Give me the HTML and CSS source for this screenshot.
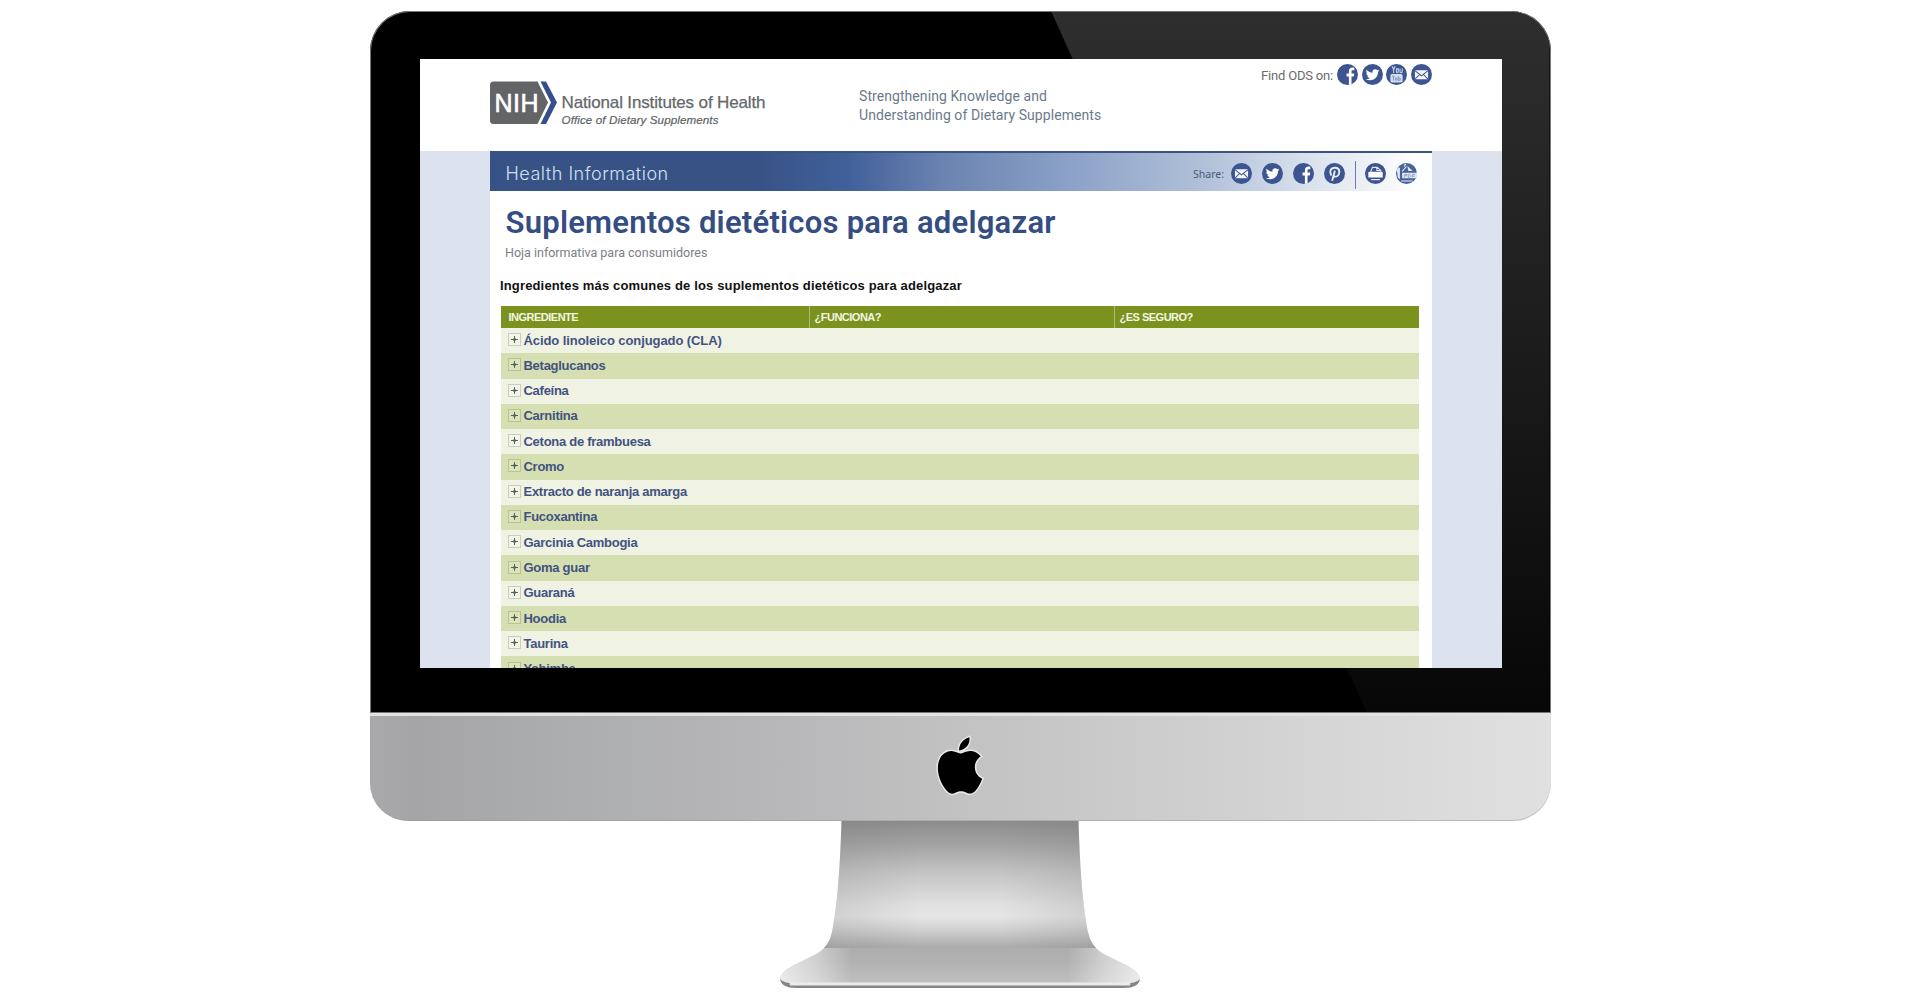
FILE: index.html
```html
<!DOCTYPE html>
<html lang="es">
<head>
<meta charset="utf-8">
<title>Suplementos dietéticos para adelgazar</title>
<link rel="stylesheet" href="styles.css">
</head>
<body>
<svg width="0" height="0" class="defs" aria-hidden="true">
  <symbol id="facebook" viewBox="0 0 24 24"><circle cx="12" cy="12" r="12" fill="#3c5590"/><path fill="#fff" d="M13.600 23.8v-9.6h-2.700v-3.3h2.7V8.3c0-2.8 1.6-4.2 4.1-4.2 1.1 0 1.8.1 2.1.1v3h-1.6c-1.2 0-1.6.6-1.6 1.5v2.2h3.1l-.5 3.3h-2.6v9.2z"/></symbol>
  <symbol id="twitter" viewBox="0 0 24 24"><circle cx="12" cy="12" r="12" fill="#3c5590"/><path fill="#fff" transform="translate(4.3 4.5) scale(.65)" d="M23.953 4.57a10 10 0 01-2.825.775 4.958 4.958 0 002.163-2.723c-.951.555-2.005.959-3.127 1.184a4.92 4.92 0 00-8.384 4.482C7.69 8.095 4.067 6.13 1.64 3.162a4.822 4.822 0 00-.666 2.475c0 1.71.87 3.213 2.188 4.096a4.904 4.904 0 01-2.228-.616v.06a4.923 4.923 0 003.946 4.827 4.996 4.996 0 01-2.212.085 4.936 4.936 0 004.604 3.417 9.867 9.867 0 01-6.102 2.105c-.39 0-.779-.023-1.17-.067a13.995 13.995 0 007.557 2.209c9.053 0 13.998-7.496 13.998-13.985 0-.21 0-.42-.015-.63A9.935 9.935 0 0024 4.59z"/></symbol>
  <symbol id="youtube" viewBox="0 0 24 24"><circle cx="12" cy="12" r="12" fill="#3c5590"/><path fill="none" stroke="#c3d0e4" stroke-width="1.3" d="M7 2.500l1.700 4v4M10.400 2.500L8.700 6.500M12 5.500v3.500q0 1 1 1t1-1V5.500zM16 5v4q0 1 1 1t1.500-1V5"/><rect x="5" y="11.500" width="14" height="9.500" rx="2" fill="#d3deed"/><path fill="none" stroke="#7f95be" stroke-width="1.100" d="M7 14h3M8.500 14v5M11 15.500v3h1.500v-3M14 14v5M14 16h2.200v2.500H14"/></symbol>
  <symbol id="mail" viewBox="0 0 24 24"><circle cx="12" cy="12" r="12" fill="#3c5590"/><rect x="4.500" y="7" width="15" height="10.500" rx="1" fill="#f4f7fb"/><path fill="none" stroke="#3c5590" stroke-width="1.200" d="M4.500 7.500l7.500 6 7.500-6M4.800 17l5-5M19.200 17l-5-5"/></symbol>
  <symbol id="pinterest" viewBox="0 0 24 24"><circle cx="12" cy="12" r="12" fill="#3c5590"/><path fill="none" stroke="#e8eef6" stroke-width="2.200" stroke-linecap="round" d="M8 13.500C6 10 7.500 5.500 12.300 5.500c3.400 0 5.200 2 5.200 4.500 0 3.200-1.900 5.600-4.200 5.600-1.200 0-2-.6-2.200-1.500M12.300 9.500L9.500 19.500"/></symbol>
  <symbol id="print" viewBox="0 0 24 24"><circle cx="12" cy="12" r="12" fill="#3c5590"/><path fill="none" stroke="#e3eaf4" stroke-width="1.200" d="M6.500 10L8.500 5h5.500l4 3.500V10M13.500 5v3.500H18"/><path fill="#fff" d="M5 10h14q1.200 0 1.200 1.200v5.300H3.800v-5.300q0-1.200 1.200-1.200z"/><path fill="none" stroke="#dbe3ef" stroke-width="1.200" d="M7 19h10"/></symbol>
  <symbol id="pdf" viewBox="0 0 24 24"><circle cx="12" cy="12" r="12" fill="#49629a"/><path fill="#dfe6f1" d="M1 7l1.800-2 1.700.5v13l-2.500-2zM9.500 1H12L9.500 5zM13 3l6 6h-5zM7 11h17v6.500H7z"/><path fill="none" stroke="#e6ecf5" stroke-width="1.200" d="M7 9.500L12 4M6 20.500h13"/><path fill="none" stroke="#8fa2c6" stroke-width="1" d="M10 16.500V13h2.500v1.500H10M14 13v3.500h1.500l1-1V14l-1-1zM18.500 16.500V13H22M18.500 15h3"/></symbol>
</svg>

<main class="computer">
  <div class="bezel">
    <div class="screen">
      <header class="site-header">
        <svg class="logo" width="280" height="46" viewBox="0 0 280 46" role="img" aria-label="NIH">
          <path fill="#636466" d="M3.500 1.500H47.500L58 22.500 47.500 44H3.500Q0 44 0 40.500V5Q0 1.500 3.500 1.500z"/>
          <path fill="#354f8c" d="M50.500 1.500H56L67 22.500 56 44h-5.500L61 22.500z"/>
          <text class="logo-mark" x="4.500" y="32" textLength="44">NIH</text>
          <text class="logo-name" x="71.500" y="27.500" textLength="204">National Institutes of Health</text>
          <text class="logo-office" x="71.500" y="43.500" textLength="157">Office of Dietary Supplements</text>
        </svg>
        <p class="tagline">Strengthening Knowledge and<br>Understanding of Dietary Supplements</p>
        <div class="social">
          <span class="social-label">Find ODS on:</span>
          <svg class="icon"><use href="#facebook"/></svg>
          <svg class="icon"><use href="#twitter"/></svg>
          <svg class="icon"><use href="#youtube"/></svg>
          <svg class="icon"><use href="#mail"/></svg>
        </div>
      </header>
      <div class="page">
        <section class="content">
          <div class="banner">
            <span class="banner-title">Health Information</span>
            <div class="share">
              <span class="share-label">Share:</span>
              <svg class="icon"><use href="#mail"/></svg>
              <svg class="icon"><use href="#twitter"/></svg>
              <svg class="icon"><use href="#facebook"/></svg>
              <svg class="icon"><use href="#pinterest"/></svg>
              <span class="divider"></span>
              <svg class="icon"><use href="#print"/></svg>
              <svg class="icon"><use href="#pdf"/></svg>
            </div>
          </div>
          <h1>Suplementos dietéticos para adelgazar</h1>
          <p class="subtitle">Hoja informativa para consumidores</p>
          <h2>Ingredientes más comunes de los suplementos dietéticos para adelgazar</h2>
          <div class="table">
            <div class="table-head"><span>INGREDIENTE</span><span>¿FUNCIONA?</span><span>¿ES SEGURO?</span></div>
            <div class="row first"><i class="plus"></i>Ácido linoleico conjugado (CLA)</div>
            <div class="row"><i class="plus"></i>Betaglucanos</div>
            <div class="row"><i class="plus"></i>Cafeína</div>
            <div class="row"><i class="plus"></i>Carnitina</div>
            <div class="row"><i class="plus"></i>Cetona de frambuesa</div>
            <div class="row"><i class="plus"></i>Cromo</div>
            <div class="row"><i class="plus"></i>Extracto de naranja amarga</div>
            <div class="row"><i class="plus"></i>Fucoxantina</div>
            <div class="row"><i class="plus"></i>Garcinia Cambogia</div>
            <div class="row"><i class="plus"></i>Goma guar</div>
            <div class="row"><i class="plus"></i>Guaraná</div>
            <div class="row"><i class="plus"></i>Hoodia</div>
            <div class="row"><i class="plus"></i>Taurina</div>
            <div class="row"><i class="plus"></i>Yohimbe</div>
          </div>
        </section>
      </div>
    </div>
  </div>
  <div class="chin">
    <svg class="apple" width="58" height="61" viewBox="-.800 -1 25.600 26" preserveAspectRatio="none"><path d="M12.152 6.896c-.948 0-2.415-1.078-3.96-1.04-2.04.027-3.91 1.183-4.961 3.014-2.117 3.675-.546 9.103 1.519 12.09 1.013 1.454 2.208 3.09 3.792 3.039 1.52-.065 2.09-.987 3.935-.987 1.831 0 2.35.987 3.96.948 1.637-.026 2.676-1.48 3.676-2.948 1.156-1.688 1.636-3.325 1.662-3.415-.039-.013-3.182-1.221-3.22-4.857-.026-3.04 2.48-4.494 2.597-4.559-1.429-2.09-3.623-2.324-4.39-2.376-2-.156-3.675 1.09-4.61 1.09zM15.100 3.830C16 2.800 16.300 1.400 16.150 0 14.500.500 13.100 1.500 12.400 2.600 11.900 3.400 11.500 4.500 11.600 5.600 13 5.500 14.300 4.800 15.100 3.830"/></svg>
  </div>
  <svg class="stand" width="362" height="168" viewBox="0 0 362 168">
    <defs>
      <linearGradient id="neck" x1="0" y1="0" x2="0" y2="1">
        <stop offset="0" stop-color="#8c8c8d"/><stop offset=".14" stop-color="#a2a2a3"/><stop offset=".32" stop-color="#c5c5c6"/><stop offset=".52" stop-color="#e1e1e2"/><stop offset=".59" stop-color="#e5e5e6"/><stop offset=".67" stop-color="#cfcfd0"/><stop offset=".77" stop-color="#adadae"/><stop offset=".86" stop-color="#b1b1b2"/><stop offset="1" stop-color="#c0c0c1"/>
      </linearGradient>
      <linearGradient id="edges" x1="0" y1="0" x2="1" y2="0">
        <stop offset="0" stop-color="#fff" stop-opacity=".7"/><stop offset=".1" stop-color="#fff" stop-opacity=".4"/><stop offset=".2" stop-color="#fff" stop-opacity="0"/><stop offset=".8" stop-color="#fff" stop-opacity="0"/><stop offset=".9" stop-color="#fff" stop-opacity=".4"/><stop offset="1" stop-color="#fff" stop-opacity=".7"/>
      </linearGradient>
      <linearGradient id="sides" x1="0" y1="0" x2="1" y2="0">
        <stop offset="0" stop-color="#777" stop-opacity=".2"/><stop offset=".35" stop-color="#777" stop-opacity="0"/><stop offset=".65" stop-color="#777" stop-opacity="0"/><stop offset="1" stop-color="#777" stop-opacity=".2"/>
      </linearGradient>
    </defs>
    <path fill="#858586" d="M1 157Q1 167 18 167H344Q361 167 361 157z"/>
    <path fill="url(#neck)" d="M62.500 0H299.500C301 50 304 85 309 111Q312 125 323 132L345 143Q361 151 361 158Q358 162 344 163H18Q4 162 1 158Q1 151 17 143L39 132Q50 125 53 111C58 85 61 50 62.500 0z"/>
    <path fill="url(#sides)" d="M62.500 0H299.500C301 50 304 85 309 111Q311 121 317 127H45Q51 121 53 111C58 85 61 50 62.500 0z"/>
    <path fill="url(#edges)" d="M45 127H317L345 143Q361 151 361 158Q358 162 344 163H18Q4 162 1 158Q1 151 17 143z"/>
    <path fill="none" stroke="#ececed" stroke-width="3" stroke-linecap="round" d="M12 163H350"/>
  </svg>
</main>
</body>
</html>
```
FILE: styles.css
```css
* { box-sizing: border-box; }
body { margin: 0; background: #fff; overflow: hidden; }
h1, h2, p { margin: 0; }
.defs { position: absolute; }

.computer {
  width: 1181px;
  margin: 11px auto 0;
  display: flex;
  flex-direction: column;
  align-items: center;
}
.bezel {
  position: relative;
  width: 1181px;
  height: 702px;
  padding: 48px 49px 0 50px;
  background: #000;
  border-radius: 40px 40px 0 0;
  box-shadow: inset 0 0 0 1px #777;
  overflow: hidden;
}
.bezel::before {
  content: "";
  position: absolute;
  inset: 1px;
  background: linear-gradient(#2e2e2e, #272727 20%, #070707);
  clip-path: polygon(681px 0, 100% 0, 100% 100%, 996px 100%);
  border-radius: 39px 39px 0 0;
}
.screen {
  position: relative;
  height: 609px;
  display: flex;
  flex-direction: column;
  background: #fefffe;
  overflow: hidden;
}
.icon { width: 21px; height: 21px; flex: none; }

.site-header {
  height: 92px;
  flex: none;
  display: flex;
  align-items: flex-start;
  padding: 0 70px;
}
.logo { margin-top: 21px; flex: none; }
.logo-mark { font: 25px "Liberation Sans", sans-serif; fill: #fff; stroke: #fff; stroke-width: .6px; }
.logo-name { font: 17px "Liberation Sans", sans-serif; fill: #65676a; stroke: #65676a; stroke-width: .25px; }
.logo-office { font: italic 11.600px "Liberation Sans", sans-serif; fill: #606264; stroke: #606264; stroke-width: .2px; }
.tagline {
  margin: 28px 0 0 89.500px;
  font: 14px/19px Roboto, sans-serif;
  letter-spacing: .07px;
  color: #6b7a8b;
  white-space: nowrap;
}
.social { display: flex; gap: 3.400px; margin: 4px 0 0 auto; align-items: center; }
.social-label { font: 13px/20px Roboto, sans-serif; letter-spacing: -.2px; color: #6b6b6e; margin: 3px 1px 0 0; }

.page { flex: 1; background: #dce2ee; padding: 0 70px; min-height: 0; }
.content { height: 520px; background: #fefffe; }
.banner {
  height: 39.500px;
  display: flex;
  align-items: center;
  justify-content: space-between;
  padding: 4px 15px 0 16px;
  border-top: 2px solid #3c5280;
  background: linear-gradient(90deg, #375285 0, #375285 28%, #41609a 38%, #6a83b0 48%, #8ca2c8 62%, #b2c1d9 76%, #dde4ee 88%, #fdfefe 98%);
}
.banner-title { font: 300 18px/24px Inter, sans-serif; letter-spacing: .5px; color: #d5e1f2; margin-top: 1px; }
.share { display: flex; align-items: center; gap: 10px; }
.share-label { font: 10.500px/16px "Noto Sans", sans-serif; color: #4a5a78; margin-right: -3px; }
.divider { width: 1px; height: 28px; background: #6b7da8; margin: 2px -1.500px 0 0; }

h1 {
  margin: 12.500px 0 0 16px;
  font: 600 31px/40px Roboto, sans-serif;
  letter-spacing: .24px;
  color: #344d83;
  white-space: nowrap;
}
.subtitle { margin: 1px 0 0 15.500px; font: 12.500px/18px Roboto, sans-serif; color: #7b8087; }
h2 {
  margin: 15px 0 0 10.500px;
  font: bold 13px/18px "Liberation Sans", sans-serif;
  letter-spacing: .15px;
  color: #111;
  white-space: nowrap;
}
.table { margin: 11px 13px 0 11px; }
.table-head {
  height: 22px;
  display: grid;
  grid-template-columns: 308px 305px 1fr;
  background: #7c921e;
  font: bold 11px/22px "Liberation Sans", sans-serif;
  letter-spacing: -.5px;
  color: #f3f6e4;
}
.table-head span { padding-left: 5px; }
.table-head span:first-child { padding-left: 8px; }
.table-head span + span { border-left: 1px solid #adbc75; }
.row {
  height: 25.270px;
  display: flex;
  align-items: center;
  gap: 3px;
  padding-left: 7px;
  background: #f0f2e3;
  font: bold 13px/24px "Liberation Sans", sans-serif;
  letter-spacing: -.27px;
  color: #425281;
}
.row.first { letter-spacing: -.08px; }
.row:nth-child(odd) { background: #d6dfb1; }
.plus {
  width: 13px;
  height: 13px;
  flex: none;
  margin-top: -2px;
  border: 1px solid #c9cfbb;
  background:
    linear-gradient(#596457, #596457) center / 7px 1px no-repeat,
    linear-gradient(#596457, #596457) center / 1px 7px no-repeat,
    linear-gradient(#59645788, #59645788) center / 3px 3px no-repeat,
    #f3f5ea;
}
.row:nth-child(odd) .plus { background-color: #dce4be; border-color: #b8c294; }

.chin {
  width: 1181px;
  height: 108px;
  padding-top: 22px;
  display: flex;
  justify-content: center;
  align-items: flex-start;
  border-radius: 0 0 38px 38px;
  background: linear-gradient(90deg, #a9a9ab 0, #a5a5a8 4%, #acadae 16%, #b7b7b9 34%, #c2c2c3 50%, #cfcfd0 70%, #d8d8d9 85%, #e0e0e1 100%);
  box-shadow: inset 0 3px 0 #e1e2e1, inset 0 -1px 0 #9a9a9b88;
}
.apple path { stroke: #e9e9e9; stroke-width: 1.300px; paint-order: stroke; }
```
